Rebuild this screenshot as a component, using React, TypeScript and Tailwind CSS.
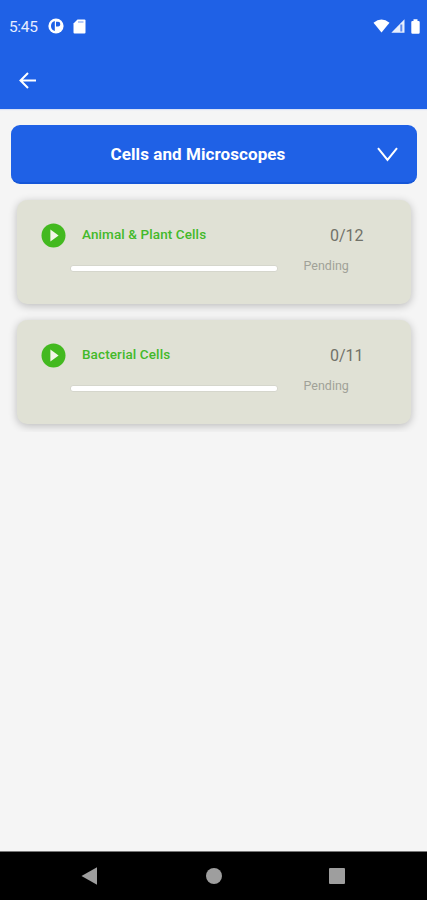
import React from 'react';

interface Topic {
  id: number;
  title: string;
  done: number;
  total: number;
  status: string;
}

const topics: Topic[] = [
  { id: 1, title: 'Animal & Plant Cells', done: 0, total: 12, status: 'Pending' },
  { id: 2, title: 'Bacterial Cells', done: 0, total: 11, status: 'Pending' },
];

const StatusBar: React.FC = () => (
  <div className="flex h-[52px] items-center justify-between pl-[9px] pr-[7px]">
    <div className="flex items-center">
      <span className="mt-[3px] w-[39px] text-[15.5px] leading-none tracking-[-0.35px] text-[#e6edff]">5:45</span>
      <svg className="h-4 w-4" viewBox="0 0 16 16">
        <circle cx="8" cy="8" r="7.6" fill="#fff" />
        <path d="M6.8 3Q3 4 3 8t3.8 5z" fill="#1f61e6" />
        <path d="M8 3.8h2.2q2 0 2 2v.8q0 2-2 2H8z" fill="#1f61e6" />
      </svg>
      <svg className="ml-[9px] h-[15px] w-[13px]" viewBox="0 0 13 15">
        <path d="M4.5.5h7Q12.5.5 12.5 1.5v12q0 1-1 1h-10q-1 0-1-1V4.5z" fill="#fff" />
        <path d="M5 3h5.5" stroke="#8fb0f3" strokeWidth="1.3" />
      </svg>
    </div>
    <div className="flex items-center">
      <svg className="h-[14px] w-[17px]" viewBox="0 0 17 14">
        <path d="M.5 3.8Q8.5-2.8 16.5 3.8L8.5 13.6z" fill="#fff" />
      </svg>
      <svg className="ml-px h-[14px] w-[14px]" viewBox="0 0 14 14">
        <path d="M13.5.3v13.4H.3z" fill="#e8effd" />
        <path d="M10.3 5.5v7" stroke="#5e8aec" strokeWidth="2" />
      </svg>
      <svg className="ml-[6px] h-[15px] w-[9px]" viewBox="0 0 9 15">
        <path d="M2.5.3h4v1.6h1q1.2 0 1.2 1.2v10.3q0 1.3-1.2 1.3h-6Q.3 14.7.3 13.4V3.1q0-1.2 1.2-1.2h1z" fill="#fff" />
      </svg>
    </div>
  </div>
);

const TopicCard: React.FC<{ topic: Topic }> = ({ topic }) => (
  <div className="flex h-[104px] rounded-[10px] bg-[#e0e1d5] pl-[24px] shadow-[0_2px_9px_rgba(0,0,0,0.24)]">
    <svg className="mt-[23px] h-[25px] w-[25px] shrink-0" viewBox="0 0 25 25">
      <circle cx="12.5" cy="12.5" r="12" fill="#43b91f" />
      <path d="M9.4 6.6v11.8l8.2-5.9z" fill="#f2f5e9" />
    </svg>
    <div className="ml-[4px] w-[208px] shrink-0">
      <h3 className="mt-[25px] pl-[12px] text-[13.5px] font-medium leading-[18px] tracking-[0.1px] text-[#43b92a]">{topic.title}</h3>
      <div className="mt-[22px] h-[7px] overflow-hidden rounded-[3px] border border-[#d5d6cc] bg-white">
        <div className="h-full bg-[#43b91f]" style={{ width: `${(topic.done / topic.total) * 100}%` }} />
      </div>
    </div>
    <div className="ml-[25px]">
      <p className="mt-[26px] pl-[27px] text-[16px] leading-5 tracking-[-0.05px] text-[#717269]">
        {topic.done}/{topic.total}
      </p>
      <p className="mt-[12px] pl-[0.5px] text-[12.5px] leading-4 text-[#a0a198]">{topic.status}</p>
    </div>
  </div>
);

export default function App() {
  return (
    <div className="flex h-[900px] w-[427px] flex-col overflow-hidden bg-[#f5f5f5] font-[Roboto,sans-serif]">
      <header className="h-[109px] shrink-0 bg-[#1f61e6] shadow-[0_1px_1px_#d8e1f7]">
        <StatusBar />
        <button className="ml-[19px] mt-[20px] block" aria-label="Back">
          <svg className="h-[17px] w-[18px]" viewBox="0 0 18 17" fill="none" stroke="#fff" strokeWidth="2">
            <path d="M17 8.5H2M9 1 1.5 8.5 9 16" />
          </svg>
        </button>
      </header>

      <main className="flex-1">
        <button className="ml-[11px] mt-4 flex h-[59px] w-[406px] items-center rounded-[9px] border-b-2 border-[#1556d8] bg-[#1f61e6] pr-[19px]">
          <span className="flex-1 pl-[8px] text-center text-[17px] font-bold leading-5 tracking-[0.08px] text-white">Cells and Microscopes</span>
          <svg className="mt-[2px] h-[15px] w-[21px]" viewBox="0 0 21 15" fill="none" stroke="#fff" strokeWidth="2">
            <path d="m1 1.2 9.5 11.6L20 1.2" />
          </svg>
        </button>

        <div className="space-y-4 overflow-hidden pb-2 pl-[17px] pr-[16px] pt-4">
          {topics.map(topic => (
            <TopicCard key={topic.id} topic={topic} />
          ))}
        </div>
      </main>

      {/* System navigation */}
      <nav className="flex h-[49px] shrink-0 items-center border-t border-[#777] bg-black pl-[81px]">
        <svg className="h-[18px] w-4" viewBox="0 0 16 18">
          <path d="M16 .3v17.4L.5 9z" fill="#9e9e9e" />
        </svg>
        <div className="ml-[109px] h-4 w-4 rounded-full bg-[#9e9e9e]" />
        <div className="ml-[107px] h-4 w-4 rounded-[1px] bg-[#9e9e9e]" />
      </nav>
    </div>
  );
}
